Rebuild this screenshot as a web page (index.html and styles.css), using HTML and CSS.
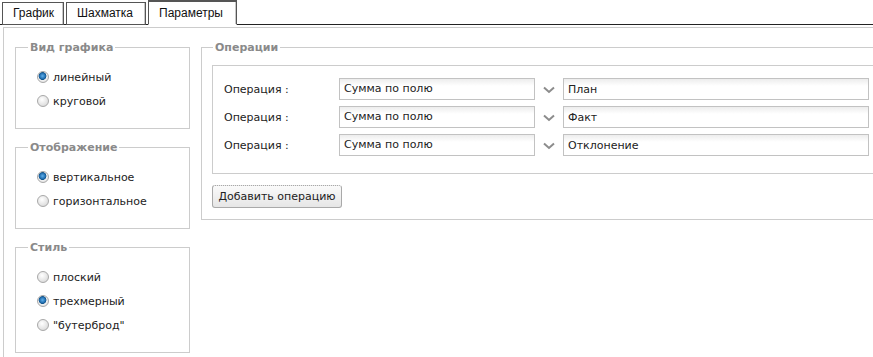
FILE: index.html
```html
<!DOCTYPE html>
<html lang="ru">
<head>
    <meta charset="UTF-8">
    <meta name="viewport" content="width=device-width, initial-scale=1.0">
    <title>Параметры диаграммы</title>
    <link rel="stylesheet" href="styles.css">
</head>
<body>
    <div class="tabs">
        <div class="tab">График</div>
        <div class="tab">Шахматка</div>
        <div class="tab active">Параметры</div>
    </div>

    <div class="panel">
        <div class="left-col">
            <fieldset class="group">
                <legend>Вид графика</legend>
                <label class="radio-row"><input type="radio" name="kind" checked> линейный</label>
                <label class="radio-row"><input type="radio" name="kind"> круговой</label>
            </fieldset>
            <fieldset class="group">
                <legend>Отображение</legend>
                <label class="radio-row"><input type="radio" name="orient" checked> вертикальное</label>
                <label class="radio-row"><input type="radio" name="orient"> горизонтальное</label>
            </fieldset>
            <fieldset class="group">
                <legend>Стиль</legend>
                <label class="radio-row"><input type="radio" name="style"> плоский</label>
                <label class="radio-row"><input type="radio" name="style" checked> трехмерный</label>
                <label class="radio-row"><input type="radio" name="style"> "бутерброд"</label>
            </fieldset>
        </div>

        <fieldset class="group ops">
            <legend>Операции</legend>
            <div class="ops-box">
                <div class="op-row">
                    <span class="op-label">Операция :</span>
                    <div class="combo">Сумма по полю</div>
                    <span class="chevron"><svg width="12" height="8" viewBox="0 0 12 8"><polyline points="1,1.5 6,6 11,1.5" fill="none" stroke="#8c8c8c" stroke-width="2"/></svg></span>
                    <input class="field" type="text" value="План">
                </div>
                <div class="op-row">
                    <span class="op-label">Операция :</span>
                    <div class="combo">Сумма по полю</div>
                    <span class="chevron"><svg width="12" height="8" viewBox="0 0 12 8"><polyline points="1,1.5 6,6 11,1.5" fill="none" stroke="#8c8c8c" stroke-width="2"/></svg></span>
                    <input class="field" type="text" value="Факт">
                </div>
                <div class="op-row">
                    <span class="op-label">Операция :</span>
                    <div class="combo">Сумма по полю</div>
                    <span class="chevron"><svg width="12" height="8" viewBox="0 0 12 8"><polyline points="1,1.5 6,6 11,1.5" fill="none" stroke="#8c8c8c" stroke-width="2"/></svg></span>
                    <input class="field" type="text" value="Отклонение">
                </div>
            </div>
            <button class="add-btn" type="button">Добавить операцию</button>
        </fieldset>
    </div>
</body>
</html>
```

FILE: styles.css
```css
* {
    margin: 0;
    padding: 0;
    box-sizing: border-box;
}

html, body {
    height: 100%;
}

body {
    font-family: "DejaVu Sans", Verdana, sans-serif;
    font-size: 11px;
    color: #222;
    background-color: white;
    display: flex;
    flex-direction: column;
    overflow: hidden;
}

/* вкладки */
.tabs {
    display: flex;
    align-items: flex-end;
    height: 25px;
    padding-left: 2px;
    border-bottom: 1px solid #222;
}

.tab {
    font-family: "Liberation Sans", Arial, sans-serif;
    font-size: 12px;
    color: #111;
    height: 23px;
    line-height: 21px;
    padding: 0 10px;
    margin-right: 2px;
    margin-bottom: -1px;
    background-color: white;
    border: 1px solid #555;
    box-shadow: inset -1px 0 0 #c8c8c8;
}

.tab:nth-child(1) {
    width: 62px;
}

.tab:nth-child(2) {
    width: 80px;
}

.tab.active {
    height: 25px;
    line-height: 23px;
    width: 89px;
    border-top: 2px solid #555;
    border-bottom-color: white;
}

/* основная панель */
.panel {
    flex: 1;
    display: flex;
    align-items: flex-start;
    gap: 11px;
    margin: 2px 0 0 3px;
    padding: 13px 0 0 11px;
    border-left: 1px solid #ccc;
    border-top: 1px solid #ccc;
}

.left-col {
    flex: 0 0 175px;
    display: flex;
    flex-direction: column;
    gap: 12px;
}

.group {
    border: 1px solid #ccc;
    min-width: 0;
    padding: 11px 0 15px 21px;
}

.group legend {
    font-weight: bold;
    color: #8a8a8a;
    margin-left: -9px;
    padding: 0 2px;
    line-height: 13px;
}

.radio-row {
    display: flex;
    align-items: center;
    gap: 4px;
    height: 24px;
}

.radio-row input {
    appearance: none;
    width: 12px;
    height: 12px;
    border-radius: 50%;
    border: 1px solid #a8a8a8;
    background: radial-gradient(circle at 40% 35%, #ffffff 0%, #e4e4e4 60%, #cfcfcf 100%);
}

.radio-row input:checked {
    background: radial-gradient(circle at 45% 40%, #5fb0ec 0%, #1b67a8 38%, #0d4f86 44%, #f2f2f2 52%, #d6d6d6 100%);
}

/* операции */
.ops {
    flex: 0 0 700px;
    padding: 11px 0 11px 10px;
}

.ops legend {
    margin-left: 1px;
}

.ops-box {
    border: 1px solid #ccc;
    padding: 12px 0 17px 11px;
    display: flex;
    flex-direction: column;
    gap: 6px;
}

.op-row {
    display: grid;
    grid-template-columns: 115px 196px 28px 306px;
    align-items: center;
    height: 22px;
}

.combo,
.field {
    height: 22px;
    line-height: 20px;
    padding: 0 4px;
    border: 1px solid #c2c2c2;
    background: linear-gradient(#ededed, #ffffff 7px);
    font-family: inherit;
    font-size: 11px;
    color: #222;
}

.chevron {
    display: flex;
    justify-content: center;
    padding-top: 1px;
}

.add-btn {
    margin-top: 11px;
    height: 23px;
    width: 130px;
    font-family: inherit;
    font-size: 11px;
    color: #222;
    border: 1px solid #a9a9a9;
    border-top-style: dotted;
    border-radius: 3px;
    background: linear-gradient(#fafafa, #e6e6e6);
    cursor: pointer;
}
```
